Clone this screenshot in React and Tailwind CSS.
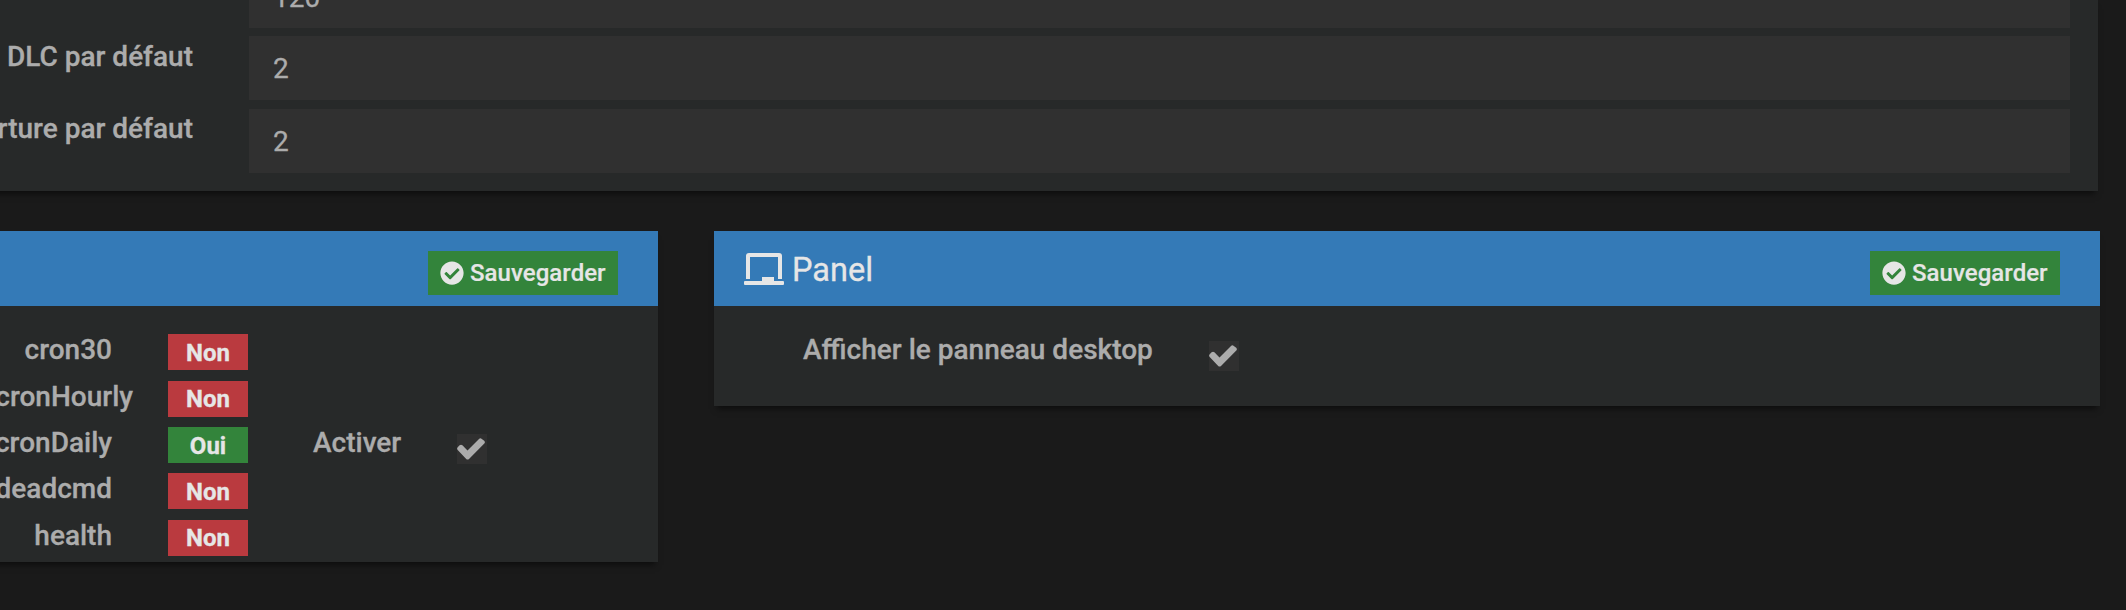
import { FaCheckCircle } from "react-icons/fa";

const fields = [
  { label: "", value: "120", row: "h-[32px]", pad: "" },
  { label: "DLC par défaut", value: "2", row: "h-[73px]", pad: "pt-px" },
  { label: "ouverture par défaut", value: "2", row: "h-[82px]", pad: "pt-0" },
];

const crons = [
  { name: "cron30", on: false, top: "h-[47px]", pad: "pt-px" },
  { name: "cronHourly", on: false, top: "h-[46px]", pad: "pb-px", wide: true },
  { name: "cronDaily", on: true, top: "h-[46px]", pad: "pt-px", option: true },
  { name: "deadcmd", on: false, top: "h-[47px]", pad: "pt-px" },
  { name: "health", on: false, top: "h-[42px]", pad: "pb-px" },
];

function SaveButton() {
  return (
    <button className="mt-[20px] flex h-[44px] w-[190px] shrink-0 items-center bg-[#33843b] pl-[12px] text-[24px] leading-[44px] font-medium text-[#e6e6e6]">
      <FaCheckCircle className="mr-[6px] size-[24px] shrink-0" />
      <span className="tracking-[0.05px] [-webkit-text-stroke:0.2px_currentColor]">Sauvegarder</span>
    </button>
  );
}

function Check({ className }) {
  return (
    <span className={`flex h-[30px] w-[30px] shrink-0 items-center bg-[#303030] ${className}`}>
      <svg viewBox="0 0 28 22" className="h-[22px] w-[28px] shrink-0 fill-[#acacac]">
        <path d="M0.7 11.9Q-.5 10.5.7 9.2L2.6 7.3Q4 6.2 5.4 7.3L10.5 12.4 22 .9Q23.4-.3 24.8.9L27.2 2.8Q28.5 4.2 27.3 5.5L12 20.9Q10.5 22.2 9.2 20.9Z" />
      </svg>
    </span>
  );
}

function LaptopIcon() {
  return (
    <svg viewBox="0 0 40 32" className="h-[32px] w-[40px] shrink-0 fill-[#e6e6e6]">
      <path d="M2 26V3Q2 0 5 0H35Q38 0 38 3V26H34V4H6V26ZM1 28H18V24H30V28H39Q40 28 40 29V31Q40 32 39 32H1Q0 32 0 31V29Q0 28 1 28Z" />
    </svg>
  );
}

export default function App() {
  return (
    <div className="h-[610px] w-[2126px] overflow-hidden bg-[#1a1a1a] font-[Roboto,sans-serif] text-[28px] leading-[40px] text-[#acacac] [-webkit-text-stroke:0.3px_currentColor]">
      <section className="-ml-[40px] h-[191px] w-[2138px] bg-[#272929] pl-[40px] shadow-[0_6px_6px_-3px_rgba(0,0,0,0.5)]">
        <div className="flex h-[36px] items-start pl-[249px]">
          <div className="flex h-[28px] w-[1821px] items-end bg-[#303030] pl-[24px]">
            <span className="mb-[10px]">{fields[0].value}</span>
          </div>
        </div>
        {fields.slice(1).map((f) => (
          <div key={f.label} className={`flex items-start ${f.row}`}>
            <div className={`flex w-[193px] shrink-0 justify-end font-medium whitespace-nowrap ${f.pad}`}>{f.label}</div>
            <div className="ml-[56px] flex h-[64px] w-[1821px] items-center bg-[#303030] pt-[2px] pl-[24px]">
              <span>{f.value}</span>
            </div>
          </div>
        ))}
      </section>

      <div className="mt-[40px] flex items-start gap-[56px]">
        <section className="-ml-[40px] h-[331px] w-[698px] bg-[#272929] shadow-[0_6px_6px_-3px_rgba(0,0,0,0.5)]">
          <header className="flex h-[75px] justify-end bg-[#347ab7] pr-[40px]">
            <SaveButton />
          </header>
          <div className="pt-[28px] pl-[40px]">
            {crons.map((c) => (
              <div key={c.name} className={`flex items-start ${c.top}`}>
                <div className={`flex shrink-0 justify-end font-medium ${c.wide ? "mr-[35px] w-[133px]" : "mr-[56px] w-[112px]"}`}>
                  <span className="-mt-[4px]">{c.name}</span>
                </div>
                <span className={`flex h-[36px] w-[80px] shrink-0 items-center justify-center text-[24px] font-bold text-[#e6e6e6] ${c.pad} ${c.on ? "bg-[#33843b]" : "bg-[#ba3a3f]"}`}>
                  {c.on ? "Oui" : "Non"}
                </span>
                {c.option && (
                  <>
                    <span className="-mt-[4px] ml-[65px] w-[144px] font-medium">Activer</span>
                    <Check className="mt-[7px]" />
                  </>
                )}
              </div>
            ))}
          </div>
        </section>

        <section className="h-[175px] w-[1386px] bg-[#272929] shadow-[0_6px_6px_-3px_rgba(0,0,0,0.5)]">
          <header className="flex h-[75px] bg-[#347ab7] pr-[40px] pl-[30px] text-[#e6e6e6]">
            <div className="flex flex-1 items-start pt-[22px]">
              <LaptopIcon />
              <h2 className="-mt-[3px] ml-[8px] text-[32.5px]">Panel</h2>
            </div>
            <SaveButton />
          </header>
          <div className="flex items-start pt-[24px] pl-[89px]">
            <span className="w-[406px] font-medium">Afficher le panneau desktop</span>
            <Check className="mt-[11px]" />
          </div>
        </section>
      </div>
    </div>
  );
}
